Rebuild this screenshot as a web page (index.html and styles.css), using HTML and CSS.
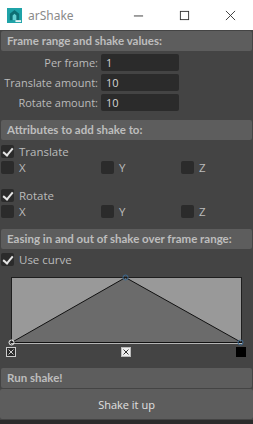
FILE: index.html
```html
<!DOCTYPE html>
<html lang="en">
<head>
    <meta charset="UTF-8">
    <title>arShake</title>
    <link rel="stylesheet" href="styles.css">
</head>
<body>
    <div class="titlebar">
        <svg class="app-icon" viewBox="0 0 16 16">
            <rect width="16" height="16" fill="#1fa3a8"/>
            <path d="M3 13V6l5-4 5 4v7z" fill="#0d6f74"/>
            <path d="M6 13V8l2-2 2 2v5z" fill="#64d0d2"/>
            <rect x="9" y="13" width="6" height="2" fill="#e8f4f4"/>
        </svg>
        <span class="app-name">arShake</span>
        <div class="win-controls">
            <svg viewBox="0 0 12 12"><path d="M1 6.5h10" stroke="#333" stroke-width="1"/></svg>
            <svg viewBox="0 0 12 12"><rect x="1.5" y="1.5" width="9" height="9" fill="none" stroke="#333"/></svg>
            <svg viewBox="0 0 12 12"><path d="M1 1l10 10M11 1L1 11" stroke="#333" stroke-width="1"/></svg>
        </div>
    </div>

    <div class="panel">
        <div class="section-header">Frame range and shake values:</div>
        <div class="fields">
            <div class="field-row">
                <label>Per frame:</label>
                <div class="field">1</div>
            </div>
            <div class="field-row">
                <label>Translate amount:</label>
                <div class="field">10</div>
            </div>
            <div class="field-row">
                <label>Rotate amount:</label>
                <div class="field">10</div>
            </div>
        </div>

        <div class="section-header">Attributes to add shake to:</div>
        <div class="attrs">
            <div class="check checked"><span class="box"></span>Translate</div>
            <div class="axis-row">
                <div class="check"><span class="box"></span>X</div>
                <div class="check"><span class="box"></span>Y</div>
                <div class="check"><span class="box"></span>Z</div>
            </div>
            <div class="check checked spaced"><span class="box"></span>Rotate</div>
            <div class="axis-row">
                <div class="check"><span class="box"></span>X</div>
                <div class="check"><span class="box"></span>Y</div>
                <div class="check"><span class="box"></span>Z</div>
            </div>
        </div>

        <div class="section-header">Easing in and out of shake over frame range:</div>
        <div class="easing">
            <div class="check checked"><span class="box"></span>Use curve</div>
            <svg class="curve" viewBox="0 0 253 84" width="253" height="84">
                <rect x="11.5" y="3.5" width="230" height="65" fill="#999" stroke="#1e1e1e"/>
                <polygon points="11.5,68.5 125.5,3.5 241.5,68.5" fill="#6b6b6b" stroke="#111" stroke-width="1"/>
                <path d="M11 69.5h231" stroke="#b5b5b5"/>
                <circle cx="11.5" cy="68.5" r="2.5" fill="none" stroke="#eee"/>
                <circle cx="125.5" cy="3.5" r="2.5" fill="none" stroke="#3d6b94"/>
                <circle cx="240.5" cy="68.5" r="2.5" fill="none" stroke="#3d6b94"/>
                <rect x="6.5" y="73.5" width="9" height="9" fill="#2b2b2b" stroke="#ccc"/>
                <path d="M8.5 75.5l5 5M13.5 75.5l-5 5" stroke="#ccc"/>
                <rect x="121.5" y="73.5" width="9" height="9" fill="#eee" stroke="#bbb"/>
                <path d="M123.5 75.5l5 5M128.5 75.5l-5 5" stroke="#333"/>
                <rect x="236" y="73" width="10" height="10" fill="#000"/>
            </svg>
        </div>

        <div class="section-header">Run shake!</div>
        <button class="run-button">Shake it up</button>
    </div>
</body>
</html>
```

FILE: styles.css
```css
* {
    margin: 0;
    padding: 0;
    box-sizing: border-box;
}

body {
    width: 253px;
    height: 424px;
    background-color: #2b2b2b;
    font-family: "Open Sans", "Noto Sans", sans-serif;
    font-size: 11px;
    color: #bbbbbb;
    overflow: hidden;
}

.titlebar {
    height: 30px;
    background-color: #fff;
    display: flex;
    align-items: center;
    padding-left: 7px;
}

.app-icon {
    width: 15px;
    height: 15px;
}

.app-name {
    margin-left: 6px;
    font-family: "Noto Sans", sans-serif;
    font-size: 12px;
    color: #8a8a8a;
}

.win-controls {
    margin-left: auto;
    display: flex;
    gap: 35px;
    padding-right: 17px;
}

.win-controls svg {
    width: 11px;
    height: 11px;
}

.panel {
    background-color: #444444;
    height: 390px;
    padding-top: 1px;
    display: flex;
    flex-direction: column;
}

.section-header {
    height: 20px;
    margin: 0 1px;
    padding-left: 6px;
    background-color: #5d5d5d;
    border-radius: 2px;
    font-family: Lato, "Open Sans", sans-serif;
    font-size: 11.5px;
    font-weight: bold;
    line-height: 20px;
    color: #bdbdbd;
    white-space: nowrap;
}

.fields {
    padding: 3px 0 9px;
    display: flex;
    flex-direction: column;
    gap: 3px;
}

.field-row {
    display: flex;
    align-items: center;
    height: 17px;
}

.field-row label {
    width: 100px;
    padding-right: 2px;
    text-align: right;
}

.field {
    width: 78px;
    height: 17px;
    margin-left: 1px;
    padding-left: 5px;
    background-color: #2b2b2b;
    border-radius: 2px;
    line-height: 17px;
    color: #d6d6d6;
}

.attrs {
    padding: 5px 0 11px;
    display: flex;
    flex-direction: column;
    gap: 3px;
}

.check {
    display: flex;
    align-items: center;
    height: 13px;
    padding-left: 1px;
    font-size: 11.5px;
}

.check .box {
    width: 13px;
    height: 13px;
    margin-right: 5px;
    background-color: #2b2b2b;
    border-radius: 2px;
    position: relative;
}

.check.checked .box::after {
    content: "";
    position: absolute;
    left: 4px;
    top: 1px;
    width: 4px;
    height: 8px;
    border-right: 2px solid #e6e6e6;
    border-bottom: 2px solid #e6e6e6;
    transform: rotate(40deg);
}

.check.spaced {
    margin-top: 12px;
}

.axis-row {
    display: flex;
}

.axis-row .check:nth-child(1) {
    width: 100px;
}

.axis-row .check:nth-child(2) {
    width: 80px;
}

.easing {
    padding-top: 4px;
    display: flex;
    flex-direction: column;
}

.curve {
    display: block;
    margin-top: 8px;
}

.run-button {
    display: block;
    margin: 1px 0 0;
    height: 30px;
    width: 253px;
    background-color: #5d5d5d;
    border: none;
    border-radius: 2px;
    font-family: "Open Sans", "Noto Sans", sans-serif;
    font-size: 11px;
    color: #e0e0e0;
}

.section-header:last-of-type {
    margin-top: 10px;
}
```
